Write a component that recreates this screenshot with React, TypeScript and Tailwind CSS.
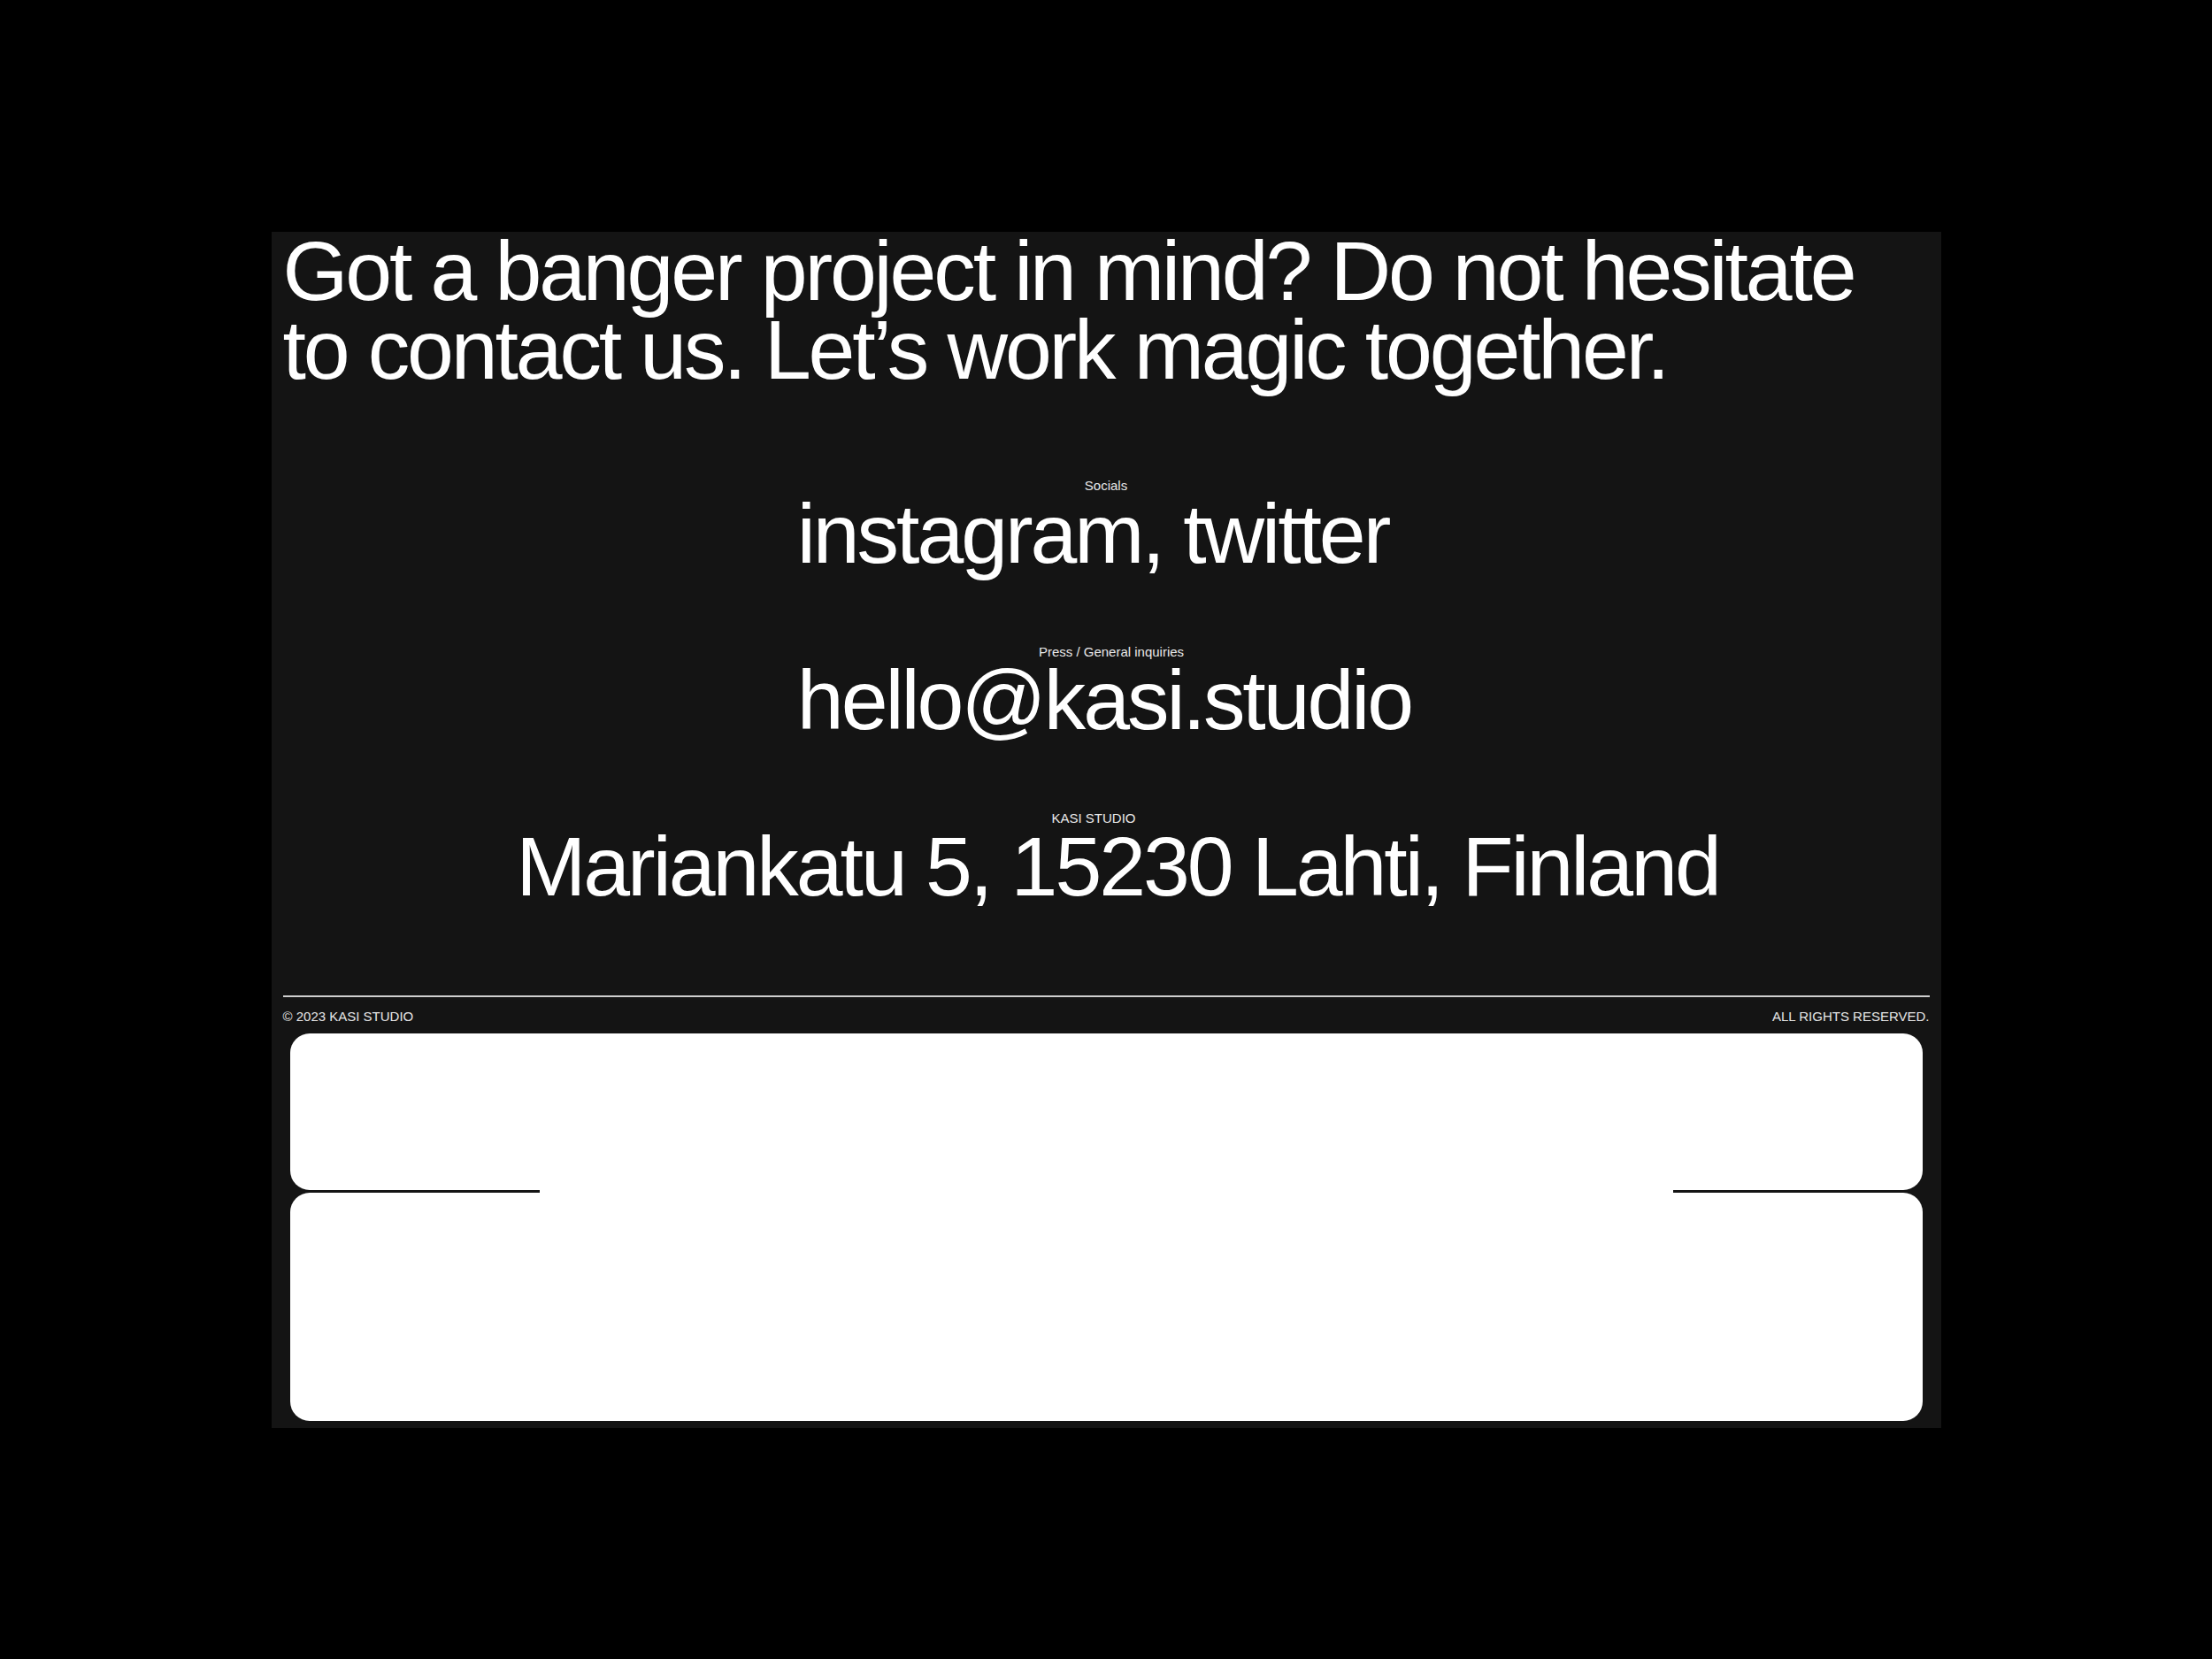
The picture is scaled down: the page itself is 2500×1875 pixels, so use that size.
import React from "react";

const font = { fontFamily: '"Liberation Sans", Arial, sans-serif' };

function Block({
  label,
  value,
  labelClass,
  valueClass,
  className,
}: {
  label: string;
  value: string;
  labelClass: string;
  valueClass: string;
  className: string;
}) {
  return (
    <div className={"flex flex-col items-center " + className}>
      <div className={"text-[15px] leading-[12px] text-[#e8e8e8] " + labelClass}>{label}</div>
      <div className={"text-[95px] leading-[96px] tracking-[-0.032em] text-white whitespace-nowrap " + valueClass}>
        {value}
      </div>
    </div>
  );
}

export default function App() {
  return (
    <div className="w-full h-[1875px] bg-black flex items-center justify-center" style={font}>
      <div className="w-[1887px] h-[1352px] bg-[#141414] flex flex-col px-[13px] pb-[8px]">
        <h1 className="text-[95px] leading-[89px] tracking-[-0.033em] text-white font-normal">
          Got a banger project in mind? Do not hesitate
          <br />
          to contact us. Let’s work magic together.
        </h1>
        <Block className="mt-[103px]" labelClass="" valueClass="pr-[30px]" label="Socials" value="instagram, twitter" />
        <Block
          className="mt-[80px]"
          labelClass="pl-[12px]"
          valueClass="pr-[4px]"
          label="Press / General inquiries"
          value="hello@kasi.studio"
        />
        <Block
          className="mt-[80px]"
          labelClass="pr-[28px]"
          valueClass="pl-[26px]"
          label="KASI STUDIO"
          value="Mariankatu 5, 15230 Lahti, Finland"
        />
        <div className="mt-[98px] h-[2px] bg-[#cfcfcf]" />
        <div className="mt-[13px] flex justify-between text-[15px] leading-[18px] text-[#e6e6e6]">
          <span>© 2023 KASI STUDIO</span>
          <span>ALL RIGHTS RESERVED.</span>
        </div>
        <div className="relative mt-[10px] mx-[8px] flex flex-col gap-[3px]">
          <div className="h-[177px] bg-white rounded-[22px]" />
          <div className="h-[258px] bg-white rounded-[22px]" />
          <div className="absolute left-[282px] right-[282px] top-[175px] h-[7px] bg-white" />
        </div>
      </div>
    </div>
  );
}
